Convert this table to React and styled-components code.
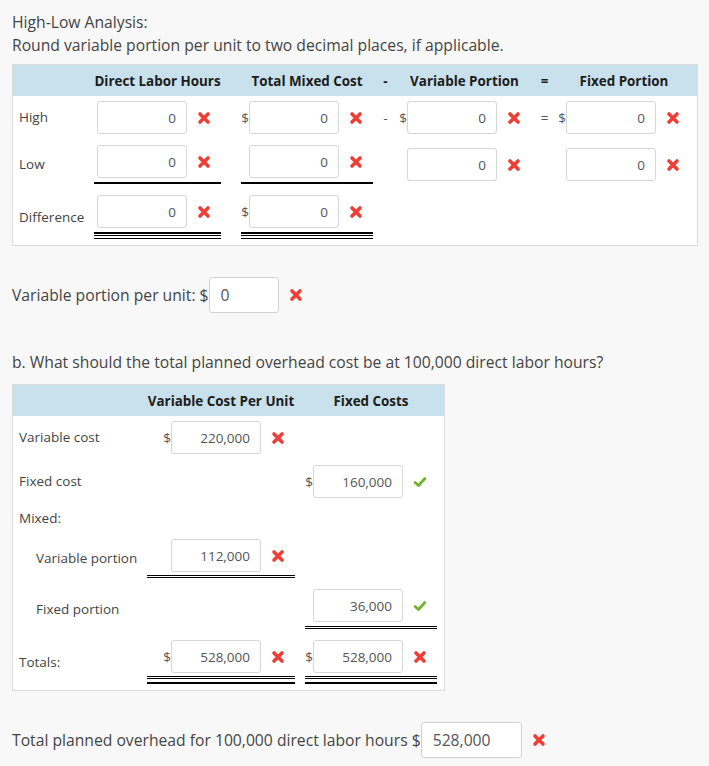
import React from "react"
import styled, { createGlobalStyle, css } from "styled-components"

const GlobalStyle = createGlobalStyle`
  body {
    margin: 0;
    background: #f8f8f8;
    font-family: "Open Sans", "DejaVu Sans", sans-serif;
    color: #444;
  }
`

const Page = styled.div`
  padding: 11px 12px 0;
`

const Intro = styled.p`
  margin: 0;
  font-size: 15.7px;
  line-height: 23px;
`

const Question = styled.p`
  margin: 38px 0 0;
  font-size: 15.7px;
  line-height: 23px;
`

const Table = styled.div`
  width: ${p => p.$width}px;
  margin-top: ${p => p.$top}px;
  background: #fff;
  border: 1px solid #dcdcdc;
`

const Row = styled.div`
  display: grid;
  grid-template-columns: ${p => p.$cols};
  align-items: center;
  padding: 5px 0 6px;
`

const HeadRow = styled.div`
  display: grid;
  grid-template-columns: ${p => p.$cols};
  align-items: center;
  height: 31px;
  background: #c9e1ec;
  font-size: 13.4px;
  font-weight: 700;
  color: #1c1c1c;
  span {
    text-align: center;
    white-space: nowrap;
  }
`

const Label = styled.div`
  padding-left: ${p => p.$indent || 6}px;
  font-size: 13.5px;
  line-height: 19px;
  color: #444;
`

const Op = styled.div`
  text-align: center;
  font-size: 13.5px;
  color: #555;
`

const Entry = styled.div`
  display: flex;
  flex-direction: column;
`

const EntryLine = styled.div`
  display: flex;
  justify-content: flex-end;
  align-items: center;
`

const Dollar = styled.span`
  font-size: 13.5px;
  color: #555;
`

const Field = styled.input`
  width: 90px;
  height: 33px;
  box-sizing: border-box;
  border: 1px solid #d6d6d6;
  border-radius: 3px;
  background: #fff;
  padding: 0 10px 0 4px;
  text-align: right;
  font: 13.5px "Open Sans", "DejaVu Sans", sans-serif;
  color: #555;
  outline: none;
`

const MarkSlot = styled.span`
  display: flex;
  align-items: center;
  justify-content: center;
  width: 14px;
  height: 14px;
  margin: 0 10px;
`

const rules = {
  single: css`
    margin-top: 4px;
    border-top: 2px solid #000;
  `,
  double: css`
    margin-top: ${p => p.$gap || 4}px;
    height: 1px;
    border-top: 1px solid #000;
    border-bottom: 1px solid #000;
  `,
  thickDouble: css`
    margin-top: 4px;
    border-top: 2px solid #000;
    padding-top: 1px;
    &::after {
      content: "";
      display: block;
      height: 2px;
      border-top: 1px solid #000;
      border-bottom: 1px solid #000;
    }
  `,
  doubleThick: css`
    margin-top: 3px;
    border-bottom: 2px solid #000;
    &::before {
      content: "";
      display: block;
      height: 1px;
      margin-bottom: 3px;
      border-top: 1px solid #000;
      border-bottom: 1px solid #000;
    }
  `,
}

const Rule = styled.div`
  ${p => rules[p.$variant]}
`

const SentenceRow = styled.div`
  display: flex;
  align-items: center;
  margin-top: ${p => p.$top}px;
  font-size: 15.7px;
  color: #444;
  white-space: nowrap;
`

const BigField = styled.input`
  width: ${p => p.$w}px;
  height: 36px;
  box-sizing: border-box;
  border: 1px solid #d2d2d2;
  border-radius: 3px;
  background: #fff;
  padding: 0 11px;
  font: 15.7px "Open Sans", "DejaVu Sans", sans-serif;
  color: #555;
  outline: none;
`

const Cross = () => (
  <svg width="14" height="14" viewBox="0 0 14 14">
    <path d="M3 3L11 11M11 3L3 11" stroke="#ee3e35" strokeWidth="3.6" strokeLinecap="round" />
  </svg>
)

const Check = () => (
  <svg width="15" height="12" viewBox="0 0 16 13">
    <path d="M2.5 7L6.3 10.6L13.5 2.5" stroke="#72b22d" strokeWidth="3.2" strokeLinecap="round" strokeLinejoin="round" fill="none" />
  </svg>
)

const Mark = ({ ok }) => <MarkSlot>{ok ? <Check /> : <Cross />}</MarkSlot>

const Cell = ({ value, dollar, ok, rule, gap }) => (
  <Entry>
    <EntryLine>
      {dollar && <Dollar>$</Dollar>}
      <Field readOnly value={value} />
      <Mark ok={ok} />
    </EntryLine>
    {rule && <Rule $variant={rule} $gap={gap} />}
  </Entry>
)

const colsA = "81px 127px 20px 132px 25px 133px 27px 132px 5px"
const colsB = "134px 148px 10px 132px 5px"

const App = () => {
  return (
    <Page>
      <GlobalStyle />
      <Intro>
        High-Low Analysis:
        <br />
        Round variable portion per unit to two decimal places, if applicable.
      </Intro>

      <Table $width={684} $top={7}>
        <HeadRow $cols={colsA}>
          <span />
          <span>Direct Labor Hours</span>
          <span />
          <span>Total Mixed Cost</span>
          <span>-</span>
          <span>Variable Portion</span>
          <span>=</span>
          <span>Fixed Portion</span>
          <span />
        </HeadRow>
        <Row $cols={colsA}>
          <Label>High</Label>
          <Cell value="0" />
          <span />
          <Cell value="0" dollar />
          <Op>-</Op>
          <Cell value="0" dollar />
          <Op>=</Op>
          <Cell value="0" dollar />
        </Row>
        <Row $cols={colsA}>
          <Label>Low</Label>
          <Cell value="0" rule="single" />
          <span />
          <Cell value="0" rule="single" />
          <span />
          <Cell value="0" />
          <span />
          <Cell value="0" />
        </Row>
        <Row $cols={colsA}>
          <Label>Difference</Label>
          <Cell value="0" rule="thickDouble" />
          <span />
          <Cell value="0" dollar rule="thickDouble" />
        </Row>
      </Table>

      <SentenceRow $top={31}>
        Variable portion per unit: $
        <BigField $w={70} readOnly value="0" />
        <Mark />
      </SentenceRow>

      <Question>
        b. What should the total planned overhead cost be at 100,000 direct labor hours?
      </Question>

      <Table $width={431} $top={10}>
        <HeadRow $cols={colsB}>
          <span />
          <span>Variable Cost Per Unit</span>
          <span />
          <span>Fixed Costs</span>
          <span />
        </HeadRow>
        <Row $cols={colsB}>
          <Label>Variable cost</Label>
          <Cell value="220,000" dollar />
        </Row>
        <Row $cols={colsB}>
          <Label>Fixed cost</Label>
          <span />
          <span />
          <Cell value="160,000" dollar ok />
        </Row>
        <Row $cols={colsB}>
          <Label>Mixed:</Label>
        </Row>
        <Row $cols={colsB}>
          <Label $indent={23}>Variable portion</Label>
          <Cell value="112,000" rule="double" gap={3} />
        </Row>
        <Row $cols={colsB}>
          <Label $indent={23}>Fixed portion</Label>
          <span />
          <span />
          <Cell value="36,000" ok rule="double" />
        </Row>
        <Row $cols={colsB}>
          <Label>Totals:</Label>
          <Cell value="528,000" dollar rule="doubleThick" />
          <span />
          <Cell value="528,000" dollar rule="doubleThick" />
        </Row>
      </Table>

      <SentenceRow $top={31}>
        Total planned overhead for 100,000 direct labor hours $
        <BigField $w={101} readOnly value="528,000" />
        <Mark />
      </SentenceRow>
    </Page>
  )
}

export default App
